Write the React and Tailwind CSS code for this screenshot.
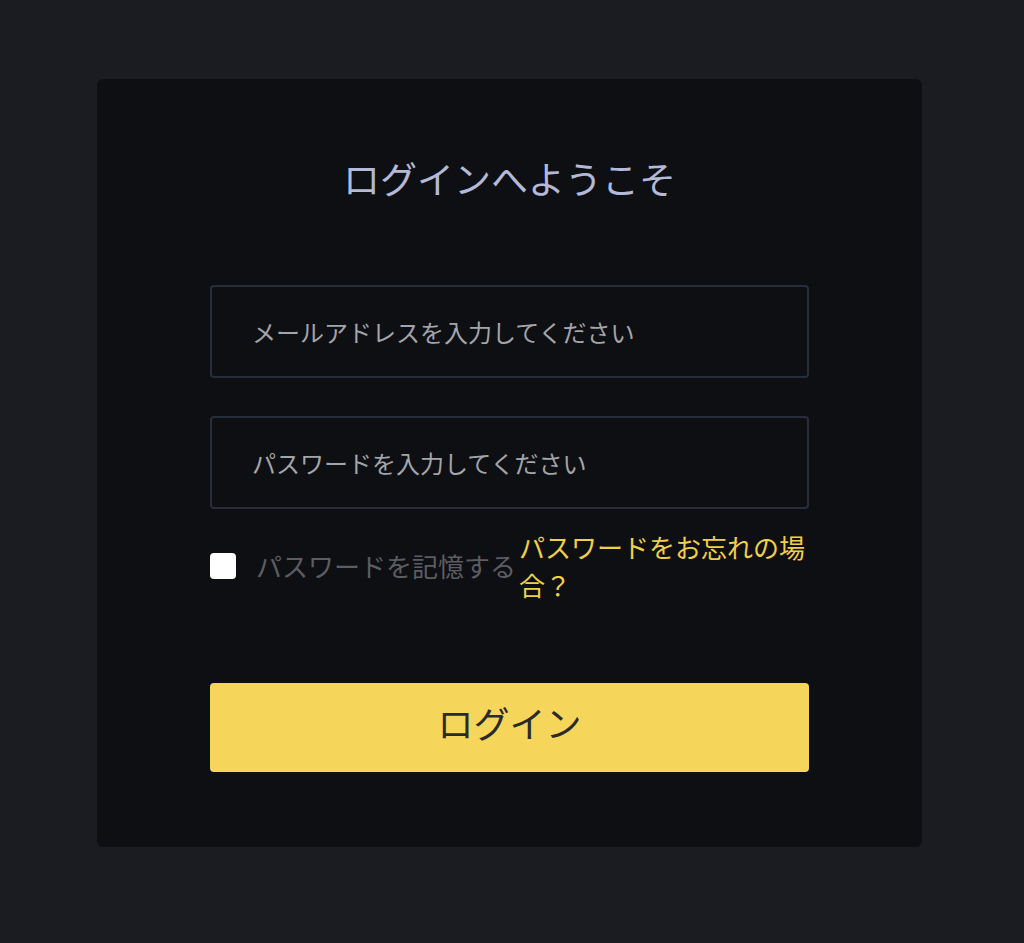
import { useState } from "react";

const FONT = { fontFamily: '"Noto Sans CJK JP", "Noto Sans", sans-serif' };

export default function App() {
  const [form, setForm] = useState({ email: "", password: "", remember: false });

  const handleChange = (e) => {
    const { name, value, type, checked } = e.target;
    setForm((prev) => ({ ...prev, [name]: type === "checkbox" ? checked : value }));
  };

  return (
    <div className="min-h-[943px] bg-[#1b1c21] pt-[79px] pl-[97px]" style={FONT}>
      <div className="w-[825px] h-[768px] bg-[#0e0f13] rounded-[6px] px-[113px] pt-[72px] flex flex-col">
        <h1 className="text-[37px] leading-[54px] text-center text-[#b3b9d6] font-normal">
          ログインへようこそ
        </h1>

        {/* Email */}
        <input
          type="email"
          name="email"
          value={form.email}
          onChange={handleChange}
          placeholder="メールアドレスを入力してください"
          className="mt-[80px] w-full h-[93px] bg-transparent border-2 border-[#262e3b] rounded-[4px] px-[40px] text-[24px] text-[#d0d0d4] placeholder:text-[#a4a5a9] focus:outline-none"
        />

        {/* Password */}
        <input
          type="password"
          name="password"
          value={form.password}
          onChange={handleChange}
          placeholder="パスワードを入力してください"
          className="mt-[38px] w-full h-[93px] bg-transparent border-2 border-[#262e3b] rounded-[4px] px-[40px] text-[24px] text-[#d0d0d4] placeholder:text-[#a4a5a9] focus:outline-none"
        />

        {/* Remember + forgot */}
        <div className="mt-[19px] flex items-center">
          <input
            type="checkbox"
            name="remember"
            checked={form.remember}
            onChange={handleChange}
            className="appearance-none shrink-0 w-[26px] h-[26px] bg-white rounded-[4px] mr-[20px] checked:bg-[#f5d55a] cursor-pointer"
          />
          <span className="shrink-0 text-[26px] leading-[38px] text-[#5c5d62]">
            パスワードを記憶する
          </span>
          <a href="#" className="ml-[3px] text-[26px] leading-[38px] text-[#f0cf4a]">
            パスワードをお忘れの場合？
          </a>
        </div>

        {/* Login */}
        <button className="mt-[79px] w-full h-[89px] flex items-center justify-center pb-[12px] bg-[#f5d55a] rounded-[4px] text-[36px] text-[#2a2a2a] cursor-pointer">
          ログイン
        </button>
      </div>
    </div>
  );
}
